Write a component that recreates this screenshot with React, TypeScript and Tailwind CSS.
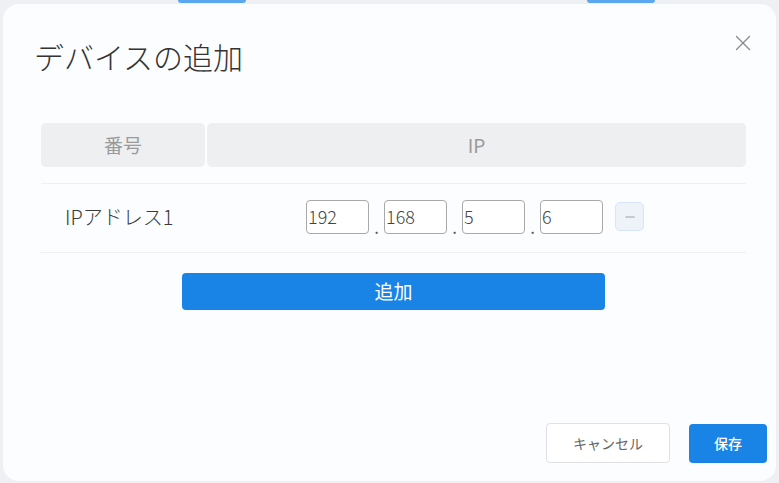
import { X, Minus } from 'lucide-react'

const FONT = { fontFamily: '"Noto Sans CJK JP", "Noto Sans", sans-serif' }

const OCTETS = ['192', '168', '5', '6']

export default function App() {
  return (
    <div className="w-[779px] h-[483px] bg-[#eef0f3] flex flex-col overflow-hidden" style={FONT}>
      {/* page behind the dialog */}
      <div className="h-[4px] flex shrink-0">
        <div className="ml-[178px] w-[68px] h-[3px] bg-[#5aa7f0] rounded-b" />
        <div className="ml-[341px] w-[68px] h-[3px] bg-[#5aa7f0] rounded-b" />
      </div>

      <div className="relative flex-1 mx-[3px] mb-[2px] bg-[#fcfdfe] rounded-[16px] flex flex-col">
        <button className="absolute right-[20px] top-[26px] text-[#8a8a8a]">
          <X className="w-[26px] h-[26px]" strokeWidth={1.2} />
        </button>

        <h1 className="pl-[31px] pt-[31px] text-[30px] leading-[42px] font-light text-[#333]">デバイスの追加</h1>

        {/* Table */}
        <div className="mt-[46px] ml-[38px] mr-[30px]">
          <div className="flex gap-[2px] h-[44px] text-[19px] text-[#9a9a9a]">
            <div className="w-[164px] bg-[#eeeff1] rounded-[5px] flex items-center justify-center">番号</div>
            <div className="flex-1 bg-[#eeeff1] rounded-[5px] flex items-center justify-center">IP</div>
          </div>
          <div className="mt-[16px] h-[70px] border-y border-[#eff0f3] flex items-center">
            <div className="w-[265px] pl-[24px] text-[20px] font-light text-[#3a3a3a] -mt-[3px]">IPアドレス1</div>
            <div className="flex items-center -mt-[3px]">
              {OCTETS.map((o, i) => (
                <div key={i} className="flex items-end">
                  {i > 0 && <span className="w-[15px] text-center text-[17px] leading-[14px] text-[#555]">.</span>}
                  <div className="w-[63px] h-[34px] border border-[#a9a9a9] rounded-[4px] bg-white pl-[1px] flex items-center text-[18px] font-light text-[#444]">
                    {o}
                  </div>
                </div>
              ))}
              <button className="ml-[12px] w-[29px] h-[29px] bg-[#eef3fa] border border-[#d6e5f7] rounded-[5px] flex items-center justify-center text-[#9aa0a8]">
                <Minus className="w-[14px] h-[14px]" strokeWidth={2} />
              </button>
            </div>
          </div>
          <div className="mt-[20px] flex">
            <button className="ml-[141px] w-[423px] h-[37px] bg-[#1984e5] rounded-[4px] text-white text-[19px]">追加</button>
          </div>
        </div>

        {/* Footer */}
        <div className="mt-auto mb-[18px] flex justify-end items-center gap-[19px] pr-[9px]">
          <button className="w-[124px] h-[40px] bg-white border border-[#e0e1e6] rounded-[4px] text-[14px] text-[#666]">キャンセル</button>
          <button className="w-[78px] h-[39px] bg-[#1984e5] rounded-[4px] text-[14px] font-medium text-white">保存</button>
        </div>
      </div>
    </div>
  )
}
